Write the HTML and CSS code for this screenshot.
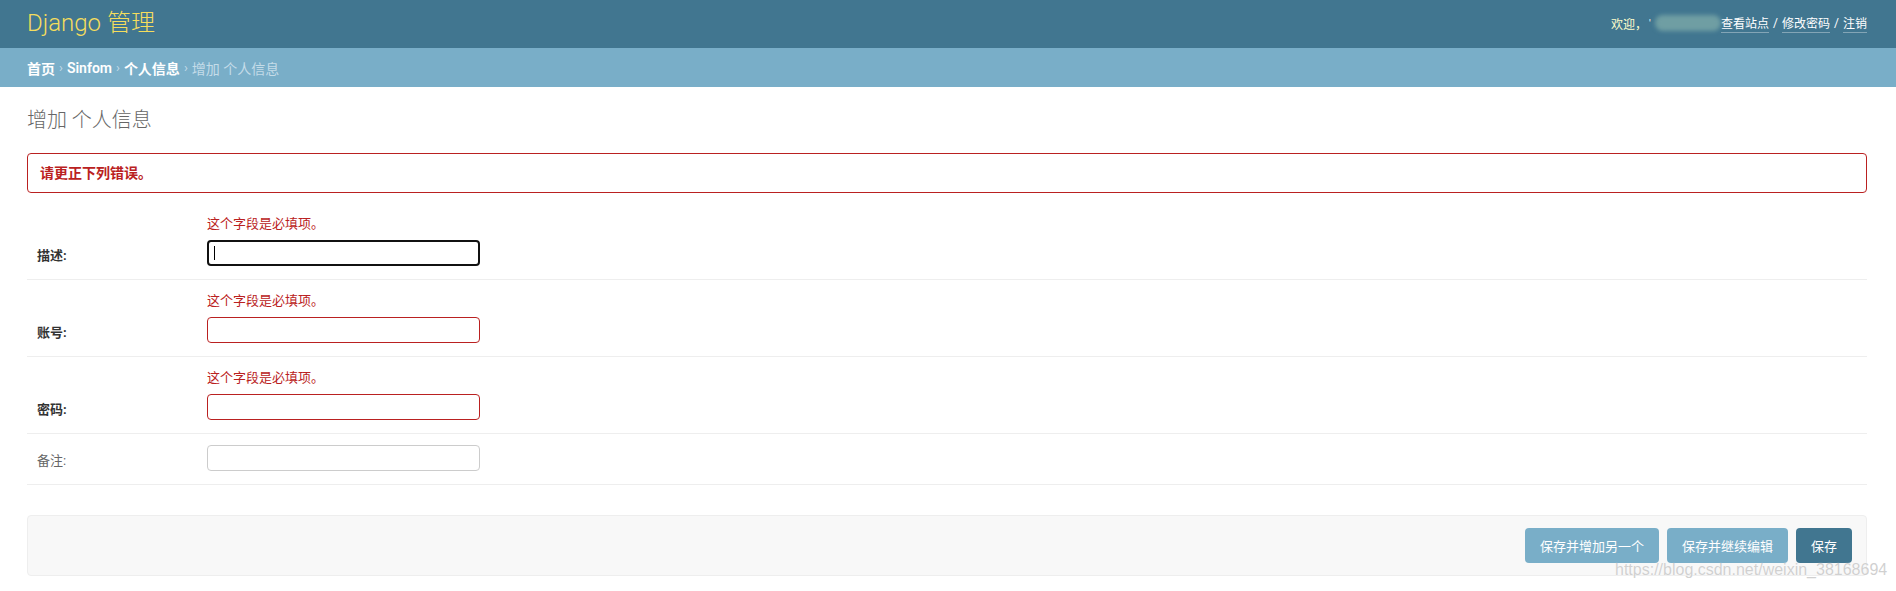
FILE: index.html
```html
<!DOCTYPE html>
<html lang="zh-CN">
<head>
<meta charset="utf-8">
<title>增加 个人信息 | Django 站点管理员</title>
<link rel="stylesheet" href="styles.css">
</head>
<body>
<div class="page">
  <header class="header">
    <h1 class="branding">Django 管理</h1>
    <div class="user-tools">
      <span class="welcome">欢迎，</span>
      <span class="user"><span class="user-tick">'</span><span class="user-blur"></span></span>
      <a href="#" class="tool-link">查看站点</a>
      <span class="sep">/</span>
      <a href="#" class="tool-link">修改密码</a>
      <span class="sep">/</span>
      <a href="#" class="tool-link">注销</a>
    </div>
  </header>

  <nav class="breadcrumbs">
    <a href="#" class="crumb-link">首页</a>
    <span class="crumb-sep">›</span>
    <a href="#" class="crumb-link">Sinfom</a>
    <span class="crumb-sep">›</span>
    <a href="#" class="crumb-link">个人信息</a>
    <span class="crumb-sep">›</span>
    <span class="crumb-current">增加 个人信息</span>
  </nav>

  <main class="content">
    <h1 class="title">增加 个人信息</h1>
    <p class="errornote">请更正下列错误。</p>

    <div class="fieldset">
      <div class="form-row">
        <ul class="errorlist"><li>这个字段是必填项。</li></ul>
        <div class="field-line">
          <label class="label required">描述:</label>
          <span class="input-wrap">
            <input type="text" class="text-input focused">
            <span class="caret"></span>
          </span>
        </div>
      </div>
      <div class="form-row">
        <ul class="errorlist"><li>这个字段是必填项。</li></ul>
        <div class="field-line">
          <label class="label required">账号:</label>
          <input type="text" class="text-input error">
        </div>
      </div>
      <div class="form-row">
        <ul class="errorlist"><li>这个字段是必填项。</li></ul>
        <div class="field-line">
          <label class="label required">密码:</label>
          <input type="text" class="text-input error">
        </div>
      </div>
      <div class="form-row">
        <div class="field-line">
          <label class="label">备注:</label>
          <input type="text" class="text-input">
        </div>
      </div>
    </div>

    <div class="submit-row">
      <button type="button" class="btn">保存并增加另一个</button>
      <button type="button" class="btn">保存并继续编辑</button>
      <button type="button" class="btn btn-default">保存</button>
    </div>
  </main>

  <div class="watermark">https://blog.csdn.net/weixin_38168694</div>
</div>
</body>
</html>
```
FILE: styles.css
```css
* { box-sizing: border-box; }
html, body {
  margin: 0;
  padding: 0;
  background: #fff;
}
body {
  font-family: Roboto, "Noto Sans CJK SC", "DejaVu Sans", sans-serif;
  color: #333;
  font-size: 14px;
}
.page {
  position: relative;
  min-height: 591px;
}

/* header */
.header {
  height: 48px;
  background: #417690;
  display: flex;
  align-items: center;
  justify-content: space-between;
  padding: 0 29px 0 27px;
}
.branding {
  margin: 0;
  font-size: 24px;
  font-weight: 300;
  color: #f5dd5d;
  line-height: 30px;
  margin-top: -2px;
}
.user-tools {
  display: flex;
  align-items: center;
  font-size: 12px;
  color: #fff;
  margin-top: -2px;
}
.welcome { color: #ffc; }
.user {
  display: inline-flex;
  align-items: center;
  width: 72px;
  margin-left: 2px;
  position: relative;
}
.user-tick {
  color: #fff;
  font-size: 10px;
  width: 6px;
}
.user-blur {
  display: inline-block;
  width: 66px;
  height: 16px;
  border-radius: 8px;
  background: #6f9ea3;
  filter: blur(2px);
}
.tool-link {
  color: #fff;
  text-decoration: none;
  border-bottom: 1px solid rgba(255, 255, 255, 0.35);
  line-height: 16px;
  margin-top: 2px;
}
.sep { margin: 0 4px; color: #fff; }

/* breadcrumbs */
.breadcrumbs {
  height: 39px;
  background: #79aec8;
  display: flex;
  align-items: center;
  padding: 0 29px 0 27px;
  font-size: 14px;
  color: #c4dce8;
}
.crumb-link {
  color: #fff;
  text-decoration: none;
  font-weight: 600;
}
.crumb-sep {
  margin: 0 4px;
  color: #c4dce8;
  font-size: 13px;
}
.crumb-current { color: #c4dce8; }

/* content */
.content {
  padding: 20px 29px 0 27px;
}
.title {
  margin: 0 0 20px;
  font-size: 20px;
  font-weight: 300;
  line-height: 26px;
  color: #666;
}
.errornote {
  margin: 0 0 10px;
  padding: 10px 12px;
  font-size: 14px;
  font-weight: bold;
  line-height: 18px;
  color: #ba2121;
  border: 1px solid #ba2121;
  border-radius: 4px;
}

.form-row {
  padding: 9px 10px 11px;
  border-bottom: 1px solid #eee;
}
.errorlist {
  list-style: none;
  margin: 0 0 3px 170px;
  padding: 0;
  font-size: 13px;
  line-height: 23px;
  color: #ba2121;
}
.field-line {
  display: flex;
  align-items: center;
  height: 30px;
}
.label {
  width: 170px;
  padding: 2px 10px 0 0;
  font-size: 13px;
  color: #666;
}
.label.required {
  font-weight: bold;
  color: #333;
}
.input-wrap {
  position: relative;
  display: inline-block;
  height: 26px;
}
.text-input {
  width: 273px;
  height: 26px;
  padding: 5px 6px;
  font-size: 13px;
  border: 1px solid #ccc;
  border-radius: 4px;
  background: #fff;
  margin: 0;
}
.text-input.error { border-color: #ba2121; }
.text-input.focused {
  border: 2px solid #111;
  outline: none;
}
.caret {
  position: absolute;
  left: 7px;
  top: 6px;
  width: 1px;
  height: 14px;
  background: #000;
}

/* submit row */
.submit-row {
  margin-top: 30px;
  padding: 12px 14px;
  background: #f8f8f8;
  border: 1px solid #eee;
  border-radius: 4px;
  display: flex;
  justify-content: flex-end;
  gap: 8px;
}
.btn {
  height: 35px;
  padding: 0 15px;
  border: none;
  border-radius: 4px;
  background: #79aec8;
  color: #fff;
  font-family: Roboto, "Noto Sans CJK SC", sans-serif;
  font-size: 13px;
  cursor: pointer;
}
.btn-default { background: #417690; }

/* watermark */
.watermark {
  position: absolute;
  left: 1615px;
  top: 561px;
  font-family: "Liberation Sans", Arial, sans-serif;
  font-size: 16px;
  color: rgba(200, 200, 200, 0.85);
  text-shadow: 0 0 1px rgba(255, 255, 255, 0.9);
  white-space: nowrap;
}
```
